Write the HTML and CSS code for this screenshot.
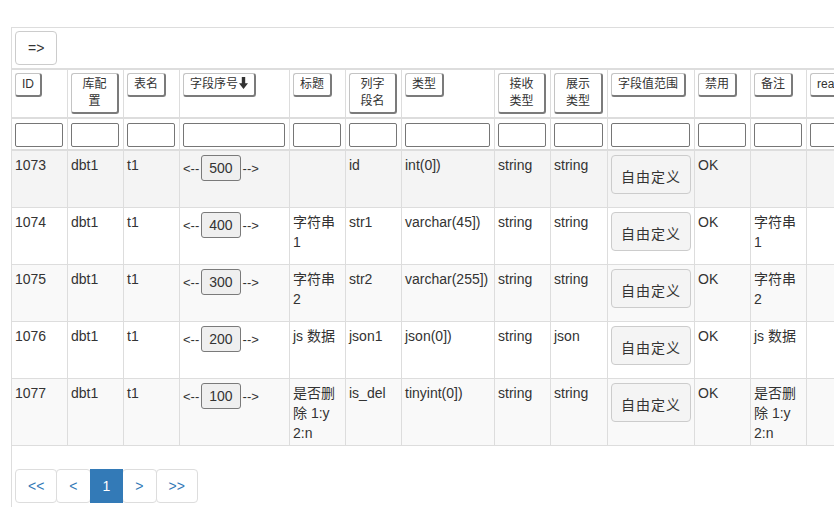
FILE: index.html
```html
<!DOCTYPE html>
<html lang="zh-CN">

<head>
    <meta charset="UTF-8">
    <meta name="viewport" content="width=device-width, initial-scale=1.0">
    <title>字段配置</title>

    <link rel="stylesheet" href="styles.css">
</head>

<body>
    <div class="page">
        <div class="panel">
            <div class="toolbar">
                <button class="btnTool" type="button">=&gt;</button>
            </div>

            <table class="grid">
                <thead>
                    <tr class="headRow">
                        <th class="w56"><button class="headBtn" type="button">ID</button></th>
                        <th class="w56"><button class="headBtn" type="button">库配置</button></th>
                        <th class="w56"><button class="headBtn" type="button">表名</button></th>
                        <th class="w110"><button class="headBtn" type="button">字段序号<svg class="sortIcon" width="9" height="12" viewBox="0 0 9 12"><path d="M2.8 0h3.4v6.2H9L4.5 12 0 6.2h2.8z" fill="#333"/></svg></button></th>
                        <th class="w56"><button class="headBtn" type="button">标题</button></th>
                        <th class="w56"><button class="headBtn" type="button">列字段名</button></th>
                        <th class="w93"><button class="headBtn" type="button">类型</button></th>
                        <th class="w56"><button class="headBtn" type="button">接收类型</button></th>
                        <th class="w57"><button class="headBtn" type="button">展示类型</button></th>
                        <th class="w87"><button class="headBtn" type="button">字段值范围</button></th>
                        <th class="w56"><button class="headBtn" type="button">禁用</button></th>
                        <th class="w56"><button class="headBtn" type="button">备注</button></th>
                        <th class="w80"><button class="headBtn" type="button">readonly</button></th>
                        <th class="w80"><button class="headBtn" type="button">操作</button></th>
                    </tr>
                    <tr class="filterRow">
                        <th><input class="filtro" type="text"></th>
                        <th><input class="filtro" type="text"></th>
                        <th><input class="filtro" type="text"></th>
                        <th><input class="filtro" type="text"></th>
                        <th><input class="filtro" type="text"></th>
                        <th><input class="filtro" type="text"></th>
                        <th><input class="filtro" type="text"></th>
                        <th><input class="filtro" type="text"></th>
                        <th><input class="filtro" type="text"></th>
                        <th><input class="filtro" type="text"></th>
                        <th><input class="filtro" type="text"></th>
                        <th><input class="filtro" type="text"></th>
                        <th><input class="filtro" type="text"></th>
                        <th><input class="filtro" type="text"></th>
                    </tr>
                </thead>
                <tbody>
                    <tr class="hover">
                        <td>1073</td>
                        <td>dbt1</td>
                        <td>t1</td>
                        <td><span class="seta">&lt;--</span><button class="btnOrdem" type="button">500</button><span class="seta">--&gt;</span></td>
                        <td></td>
                        <td>id</td>
                        <td>int(0])</td>
                        <td>string</td>
                        <td>string</td>
                        <td><button class="btnRange" type="button">自由定义</button></td>
                        <td>OK</td>
                        <td></td>
                        <td></td>
                        <td></td>
                    </tr>
                    <tr>
                        <td>1074</td>
                        <td>dbt1</td>
                        <td>t1</td>
                        <td><span class="seta">&lt;--</span><button class="btnOrdem" type="button">400</button><span class="seta">--&gt;</span></td>
                        <td>字符串 1</td>
                        <td>str1</td>
                        <td>varchar(45])</td>
                        <td>string</td>
                        <td>string</td>
                        <td><button class="btnRange" type="button">自由定义</button></td>
                        <td>OK</td>
                        <td>字符串 1</td>
                        <td></td>
                        <td></td>
                    </tr>
                    <tr class="odd">
                        <td>1075</td>
                        <td>dbt1</td>
                        <td>t1</td>
                        <td><span class="seta">&lt;--</span><button class="btnOrdem" type="button">300</button><span class="seta">--&gt;</span></td>
                        <td>字符串 2</td>
                        <td>str2</td>
                        <td>varchar(255])</td>
                        <td>string</td>
                        <td>string</td>
                        <td><button class="btnRange" type="button">自由定义</button></td>
                        <td>OK</td>
                        <td>字符串 2</td>
                        <td></td>
                        <td></td>
                    </tr>
                    <tr>
                        <td>1076</td>
                        <td>dbt1</td>
                        <td>t1</td>
                        <td><span class="seta">&lt;--</span><button class="btnOrdem" type="button">200</button><span class="seta">--&gt;</span></td>
                        <td>js 数据</td>
                        <td>json1</td>
                        <td>json(0])</td>
                        <td>string</td>
                        <td>json</td>
                        <td><button class="btnRange" type="button">自由定义</button></td>
                        <td>OK</td>
                        <td>js 数据</td>
                        <td></td>
                        <td></td>
                    </tr>
                    <tr class="odd">
                        <td>1077</td>
                        <td>dbt1</td>
                        <td>t1</td>
                        <td><span class="seta">&lt;--</span><button class="btnOrdem" type="button">100</button><span class="seta">--&gt;</span></td>
                        <td>是否删除 1:y 2:n</td>
                        <td>is_del</td>
                        <td>tinyint(0])</td>
                        <td>string</td>
                        <td>string</td>
                        <td><button class="btnRange" type="button">自由定义</button></td>
                        <td>OK</td>
                        <td>是否删除 1:y 2:n</td>
                        <td></td>
                        <td></td>
                    </tr>
                </tbody>
            </table>

            <ul class="pager">
                <li><a href="#">&lt;&lt;</a></li>
                <li><a href="#">&lt;</a></li>
                <li class="active"><a href="#">1</a></li>
                <li><a href="#">&gt;</a></li>
                <li><a href="#">&gt;&gt;</a></li>
            </ul>
        </div>
    </div>
</body>

</html>
```

FILE: styles.css
```css
* {
    box-sizing: border-box;
}

body {
    margin: 0;
    background-color: white;
    color: #333;
    font-family: "Liberation Sans", "Noto Sans CJK SC", sans-serif;
    font-size: 14px;
    line-height: 20px;
    overflow: hidden;
}

.page {
    padding: 27px 0 0 11px;
}

.panel {
    min-height: 480px;
    border-top: 1px solid #ddd;
    border-left: 1px solid #ddd;
    overflow: hidden;
}

.toolbar {
    padding: 3px;
}

.btnTool {
    height: 34px;
    padding: 6px 12px;
    border: 1px solid #ccc;
    border-radius: 4px;
    background-color: white;
    color: #333;
    font-family: inherit;
    font-size: 14px;
    line-height: 20px;
}

.grid {
    width: 955px;
    table-layout: fixed;
    border-collapse: separate;
    border-spacing: 0;
}

.grid th,
.grid td {
    border-right: 1px solid #ddd;
    border-bottom: 1px solid #ddd;
    vertical-align: top;
    text-align: left;
}

.grid th {
    padding: 3px 4px 3px 3px;
    font-weight: normal;
}

.grid td {
    padding: 4px 3px 2px;
}

.w56 { width: 56px; }
.w57 { width: 57px; }
.w80 { width: 80px; }
.w87 { width: 87px; }
.w93 { width: 93px; }
.w110 { width: 110px; }

.headRow th {
    border-top: 2px solid #ddd;
    border-bottom: 2px solid #ddd;
}

.headBtn {
    max-width: 100%;
    padding: 2px 6px;
    border-style: solid;
    border-width: 1px 2px 2px 1px;
    border-color: #c4c4c4 #7b7b7b #7b7b7b #c4c4c4;
    border-radius: 3px;
    background-color: white;
    color: #333;
    font-family: inherit;
    font-size: 12px;
    line-height: 17px;
    white-space: normal;
}

.sortIcon {
    margin-left: 1px;
    vertical-align: -1px;
}

.filterRow th {
    padding: 4px 4px 2px 3px;
    border-bottom: 2px solid #ddd;
}

.filtro {
    display: block;
    width: 100%;
    height: 24px;
    border: 1px solid #767676;
    border-radius: 2px;
    background-color: white;
}

.grid tbody tr.odd {
    background-color: #f9f9f9;
}

.grid tbody tr.hover {
    background-color: #f4f4f4;
}

.seta {
    font-size: 13px;
}

.btnOrdem {
    height: 26px;
    padding: 4px 7px;
    margin: 0 2px;
    border: 1px solid #7a7a7a;
    border-radius: 3px;
    background-color: #efefef;
    color: #333;
    font-family: inherit;
    font-size: 14px;
    line-height: 16px;
}

.btnRange {
    display: block;
    width: 100%;
    height: 39px;
    margin-bottom: 11px;
    padding: 4px 0 0;
    border: 1px solid #ccc;
    border-radius: 4px;
    background-color: #f4f4f4;
    color: #333;
    font-family: inherit;
    font-size: 14px;
    line-height: 20px;
    letter-spacing: 1px;
}

.pager {
    display: flex;
    list-style: none;
    margin: 23px 0 0 3px;
    padding: 0;
}

.pager li a {
    display: block;
    margin-left: -1px;
    padding: 6px 12px;
    border: 1px solid #ddd;
    border-radius: 4px;
    background-color: white;
    color: #337ab7;
    line-height: 20px;
    text-decoration: none;
}

.pager li:first-child a {
    margin-left: 0;
}

.pager li.active a {
    position: relative;
    border-color: #337ab7;
    border-radius: 0;
    background-color: #337ab7;
    color: white;
}
```
